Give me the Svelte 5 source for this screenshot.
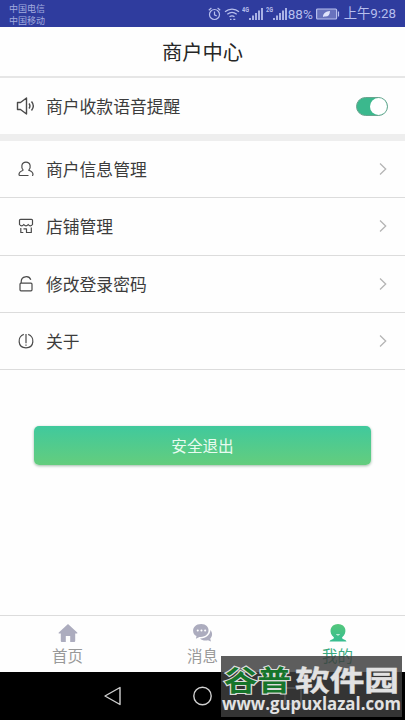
<script>
    let voice = $state(true);
    let active = $state('mine');

    const menu = [
        { icon: 'user', label: '商户信息管理' },
        { icon: 'shop', label: '店铺管理' },
        { icon: 'lock', label: '修改登录密码' },
        { icon: 'about', label: '关于' }
    ];

    const tabs = [
        { id: 'home', label: '首页' },
        { id: 'message', label: '消息' },
        { id: 'mine', label: '我的' }
    ];
</script>

{#snippet signal(label)}
    <svg class="signal" width="21" height="16" viewBox="0 0 21 16">
        <text x="0" y="6" textLength="7" lengthAdjust="spacingAndGlyphs">{label}</text>
        <path d="M8 14v-2M11 14V9.500M14 14V7M17 14V4.500M20 14V2" />
    </svg>
{/snippet}

<div class="screen">
    <div class="status">
        <div class="carriers">
            <span>中国电信</span>
            <span>中国移动</span>
        </div>
        <div class="state">
            <svg class="alarm" width="13" height="14" viewBox="0 0 13 14">
                <circle cx="6.500" cy="7.500" r="5" />
                <path d="M6.500 4.500v3.300l2.200 1.300M.8 3.200 3.400 1M12.200 3.200 9.600 1" />
            </svg>
            <svg class="wifi" width="16" height="14" viewBox="0 0 16 14">
                <path d="M1 4.800c4-3.700 10-3.700 14 0M3.300 7.300c2.800-2.400 6.600-2.400 9.400 0M5.500 9.700c1.600-1.200 3.400-1.200 5 0" />
                <path d="M6 12.300h1.500M9.300 12.300h2" />
            </svg>
            {@render signal('4G')}
            {@render signal('2G')}
            <span class="percent">88%</span>
            <svg class="battery" width="24" height="12" viewBox="0 0 24 12">
                <rect x=".6" y="1" width="20" height="10" rx="1" />
                <path class="leaf" d="M7 9c0-4 3-5.500 7-6-.2 4-2 6-5.500 5.500z" />
                <path d="M22.500 3.500v5" />
            </svg>
            <span class="time">上午9:28</span>
        </div>
    </div>

    <header>商户中心</header>

    <div class="row voice">
        <svg class="icon speaker" width="20" height="20" viewBox="0 0 20 20">
            <path d="M1.500 6.500h3L10.500 2v16l-6-4.500h-3z" />
            <path d="M13 7.500c1.100 1.500 1.100 3.500 0 5M15.500 5.500c2.200 2.700 2.200 6.300 0 9" />
        </svg>
        <span class="label">商户收款语音提醒</span>
        <button class="switch" class:on={voice} aria-label="商户收款语音提醒" onclick={() => voice = !voice}>
            <span class="knob"></span>
        </button>
    </div>

    <div class="menu">
        {#each menu as item}
            <div class="row">
                <svg class="icon" width="20" height="20" viewBox="0 0 20 20">
                    {#if item.icon == 'user'}
                        <path d="M7.300 11.300C4.800 8.800 5.200 3.200 10 3.200s5.200 5.600 2.700 8.100c2.600.8 4.300 2 4.300 4.200 0 .7-.3 1-1 1M7.300 11.300C4.700 12.200 3 13.300 3 15.500c0 .7.300 1 1 1h8.500" />
                    {:else if item.icon == 'shop'}
                        <path d="M4.500 3.300h11q1 0 1 1v4.200q-1 1.300-2.200 1.300t-2.100-1.300Q11.200 9.800 10 9.800T7.800 8.500Q6.900 9.800 5.700 9.800T3.500 8.500V4.300q0-1 1-1z" />
                        <path d="M4.800 12v4.500h2.500M7.500 12.800h3v3.700h4.800v-5" />
                    {:else if item.icon == 'lock'}
                        <rect x="4" y="9.200" width="12" height="7.600" rx="1" />
                        <path d="M5.200 9V7.700c0-5.800 7.800-6.600 9.600-1.900" />
                    {:else}
                        <path d="M7.800 3.400C1.200 5.400 1.300 16.800 10 16.800S18.800 5.400 12.200 3.400" />
                        <path d="M10 3v9.200M10 13.500v1.200" />
                    {/if}
                </svg>
                <span class="label">{item.label}</span>
                <svg class="arrow" width="8" height="14" viewBox="0 0 8 14">
                    <path d="m1 1.500 5.700 5.500L1 12.500" />
                </svg>
            </div>
        {/each}
    </div>

    <button class="logout">安全退出</button>

    <nav>
        {#each tabs as tab}
            <button class="tab" class:active={active == tab.id} onclick={() => active = tab.id}>
                <svg width="20" height="20" viewBox="0 0 20 20">
                    {#if tab.id == 'home'}
                        <path d="M10 1 .8 9.500c-.4.500-.2 1 .5 1h1.500V18q0 1 1 1h4v-6h4.400v6h4q1 0 1-1v-7.500h1.500c.7 0 .9-.5.500-1z" />
                    {:else if tab.id == 'message'}
                        <path d="M17.500 7c2.300 3 2 6.500-.3 8.700l.8 2.800-3-1.300c-3 .8-6 .2-8-1.700C13 15.700 17 12 17.500 7z" />
                        <path d="M8.300 1c-9.600 0-10.200 10-4.800 12l-.6 2.800 3.500-1.900C18 15 18.500 1 8.300 1z" />
                        <path class="dots" d="M4.700 7.500h.1M8.400 7.500h.1M12.100 7.500h.1" />
                    {:else}
                        <defs>
                            <linearGradient id="mine" x1="0" y1="0" x2="0" y2="1">
                                <stop offset="0" stop-color="#54c77b" />
                                <stop offset="1" stop-color="#36bd91" />
                            </linearGradient>
                        </defs>
                        <path fill="url(#mine)" d="M10 1c-8.500 0-9.500 9.200-4.200 13.300.4 1-.2 1.500-1.300 1.900-1.500.5-2.500 1-3 2.300h17c-.5-1.300-1.500-1.800-3-2.300-1.100-.4-1.700-.9-1.300-1.900C19.500 10.200 18.500 1 10 1z" />
                        <path class="smile" d="M8.500 11.500q1.500 1 3 0" />
                    {/if}
                </svg>
                <span>{tab.label}</span>
            </button>
        {/each}
    </nav>

    <div class="keys">
        <svg width="20" height="20" viewBox="0 0 20 20">
            <path d="M17 1.500v17L2 10z" />
        </svg>
        <svg width="20" height="20" viewBox="0 0 20 20">
            <circle cx="9.500" cy="10" r="8.700" />
        </svg>
        <svg width="20" height="20" viewBox="0 0 20 20">
            <rect x="2" y="2" width="16" height="16" />
        </svg>
    </div>

    <div class="mark">
        <svg width="181" height="61" viewBox="0 0 181 61">
            <g class="name">
                <text class="green" x="3" y="35" textLength="67" lengthAdjust="spacingAndGlyphs">谷普</text>
                <text x="74" y="35" textLength="104" lengthAdjust="spacingAndGlyphs">软件园</text>
            </g>
            <text class="site" x="1" y="54" textLength="179" lengthAdjust="spacingAndGlyphs">www.gupuxlazal.com</text>
        </svg>
    </div>
</div>

<style>
    :global(body) {
        background: #fff;
    }
    .screen {
        position: relative;
        display: flex;
        flex-direction: column;
        width: 405px;
        height: 720px;
        overflow: hidden;
        background: #fefefe;
        color: #3c3c3c;
        font-family: Roboto, "Noto Sans CJK SC", sans-serif;
    }
    svg {
        display: block;
        flex: none;
        fill: none;
    }
    button {
        padding: 0;
        border: 0;
        font-family: inherit;
    }

    .status {
        display: flex;
        justify-content: space-between;
        height: 27px;
        padding: 0 9px;
        background: #2f3c9e;
        color: #b7bfed;
    }
    .carriers {
        display: flex;
        flex-direction: column;
        padding-top: 3px;
        font-size: 9px;
        line-height: 12px;
        color: #a3acdf;
    }
    .state {
        display: flex;
        align-items: center;
        white-space: nowrap;
    }
    .state svg {
        stroke: #b7bfed;
        stroke-width: 1.200;
    }
    .wifi {
        margin-left: 3px;
    }
    .signal {
        margin-left: 3px;
    }
    .wifi + .signal {
        margin-left: 2px;
    }
    .state .signal {
        stroke-width: 1.800;
    }
    .signal text {
        fill: #b7bfed;
        stroke: none;
        font-size: 7px;
        font-weight: 700;
    }
    .percent {
        width: 25px;
        margin-left: 1px;
        font-size: 13.500px;
    }
    .battery {
        margin-left: 3px;
    }
    .battery rect {
        fill: #6872bd;
    }
    .state .leaf {
        fill: #dfe3fb;
        stroke: none;
    }
    .time {
        margin-left: 4px;
        font-size: 13.300px;
        line-height: 20px;
    }

    header {
        box-sizing: border-box;
        height: 51px;
        border-bottom: 2px solid #e6e6e6;
        padding-top: 1px;
        font-size: 20.300px;
        line-height: 51px;
        text-align: center;
        color: #262626;
    }

    .row {
        box-sizing: border-box;
        display: flex;
        align-items: center;
        height: 57.300px;
        padding: 0 18px 0 16px;
        border-bottom: 1.500px solid #dcdcdc;
    }
    .voice {
        height: 63px;
        padding-right: 17px;
        border-bottom: 7px solid #eee;
    }
    .icon {
        stroke: #4a4a4a;
        stroke-width: 1.200;
        stroke-linejoin: round;
    }
    .speaker {
        stroke-width: 1.400;
    }
    .label {
        flex: 1;
        margin-left: 10px;
        padding-top: 2px;
        font-size: 16.800px;
        line-height: 24px;
    }
    .arrow {
        stroke: #b5b5b5;
        stroke-width: 1.300;
    }
    .switch {
        box-sizing: border-box;
        display: flex;
        width: 32px;
        height: 19px;
        border: 1px solid #6aa48f;
        border-radius: 10px;
        background: #ccc;
    }
    .switch.on {
        justify-content: flex-end;
        background: #3bb88d;
    }
    .knob {
        width: 17px;
        height: 17px;
        border-radius: 50%;
        background: #fff;
    }

    .logout {
        height: 39px;
        margin: 56px 34px 0;
        padding-top: 3px;
        border-radius: 5px;
        background: linear-gradient(#40c99d, #64cd7d);
        box-shadow: 0 1px 3px #9fb8a8;
        color: #e8fbf0;
        font-size: 15.600px;
        line-height: 36px;
    }

    nav {
        box-sizing: border-box;
        display: flex;
        height: 57px;
        margin-top: auto;
        border-top: 1px solid #dcdcdc;
    }
    .tab {
        flex: 1;
        display: flex;
        flex-direction: column;
        align-items: center;
        padding-top: 7px;
        background: none;
        color: #999;
        font-size: 15.500px;
        line-height: 24px;
    }
    .tab span {
        padding-top: 2px;
    }
    .tab svg {
        fill: #acacbe;
    }
    .tab.active {
        color: #3aaa80;
    }
    .tab .dots {
        stroke: #fff;
        stroke-width: 2;
        stroke-linecap: round;
    }
    .tab .smile {
        fill: none;
        stroke: #fff;
    }

    .keys {
        display: flex;
        justify-content: center;
        align-items: center;
        gap: 70px;
        height: 48px;
        background: #000;
    }
    .keys svg {
        stroke: #d0d0d0;
        stroke-width: 1.400;
        stroke-linejoin: round;
    }

    .mark {
        position: absolute;
        left: 221px;
        top: 656px;
        width: 181px;
        height: 61px;
        background: rgba(62, 62, 62, 0.84);
    }
    .mark text {
        fill: #e2e2e2;
    }
    .name text {
        font-family: "Noto Sans CJK SC", sans-serif;
        font-size: 28px;
        font-weight: 700;
        stroke: #e2e2e2;
        stroke-width: 0.400;
    }
    .mark .name .green {
        fill: #16752b;
        stroke: #dcdcdc;
        stroke-width: 2.200;
        paint-order: stroke;
    }
    .mark .site {
        font-family: "Open Sans", sans-serif;
        font-size: 18px;
        font-weight: 700;
    }
</style>
